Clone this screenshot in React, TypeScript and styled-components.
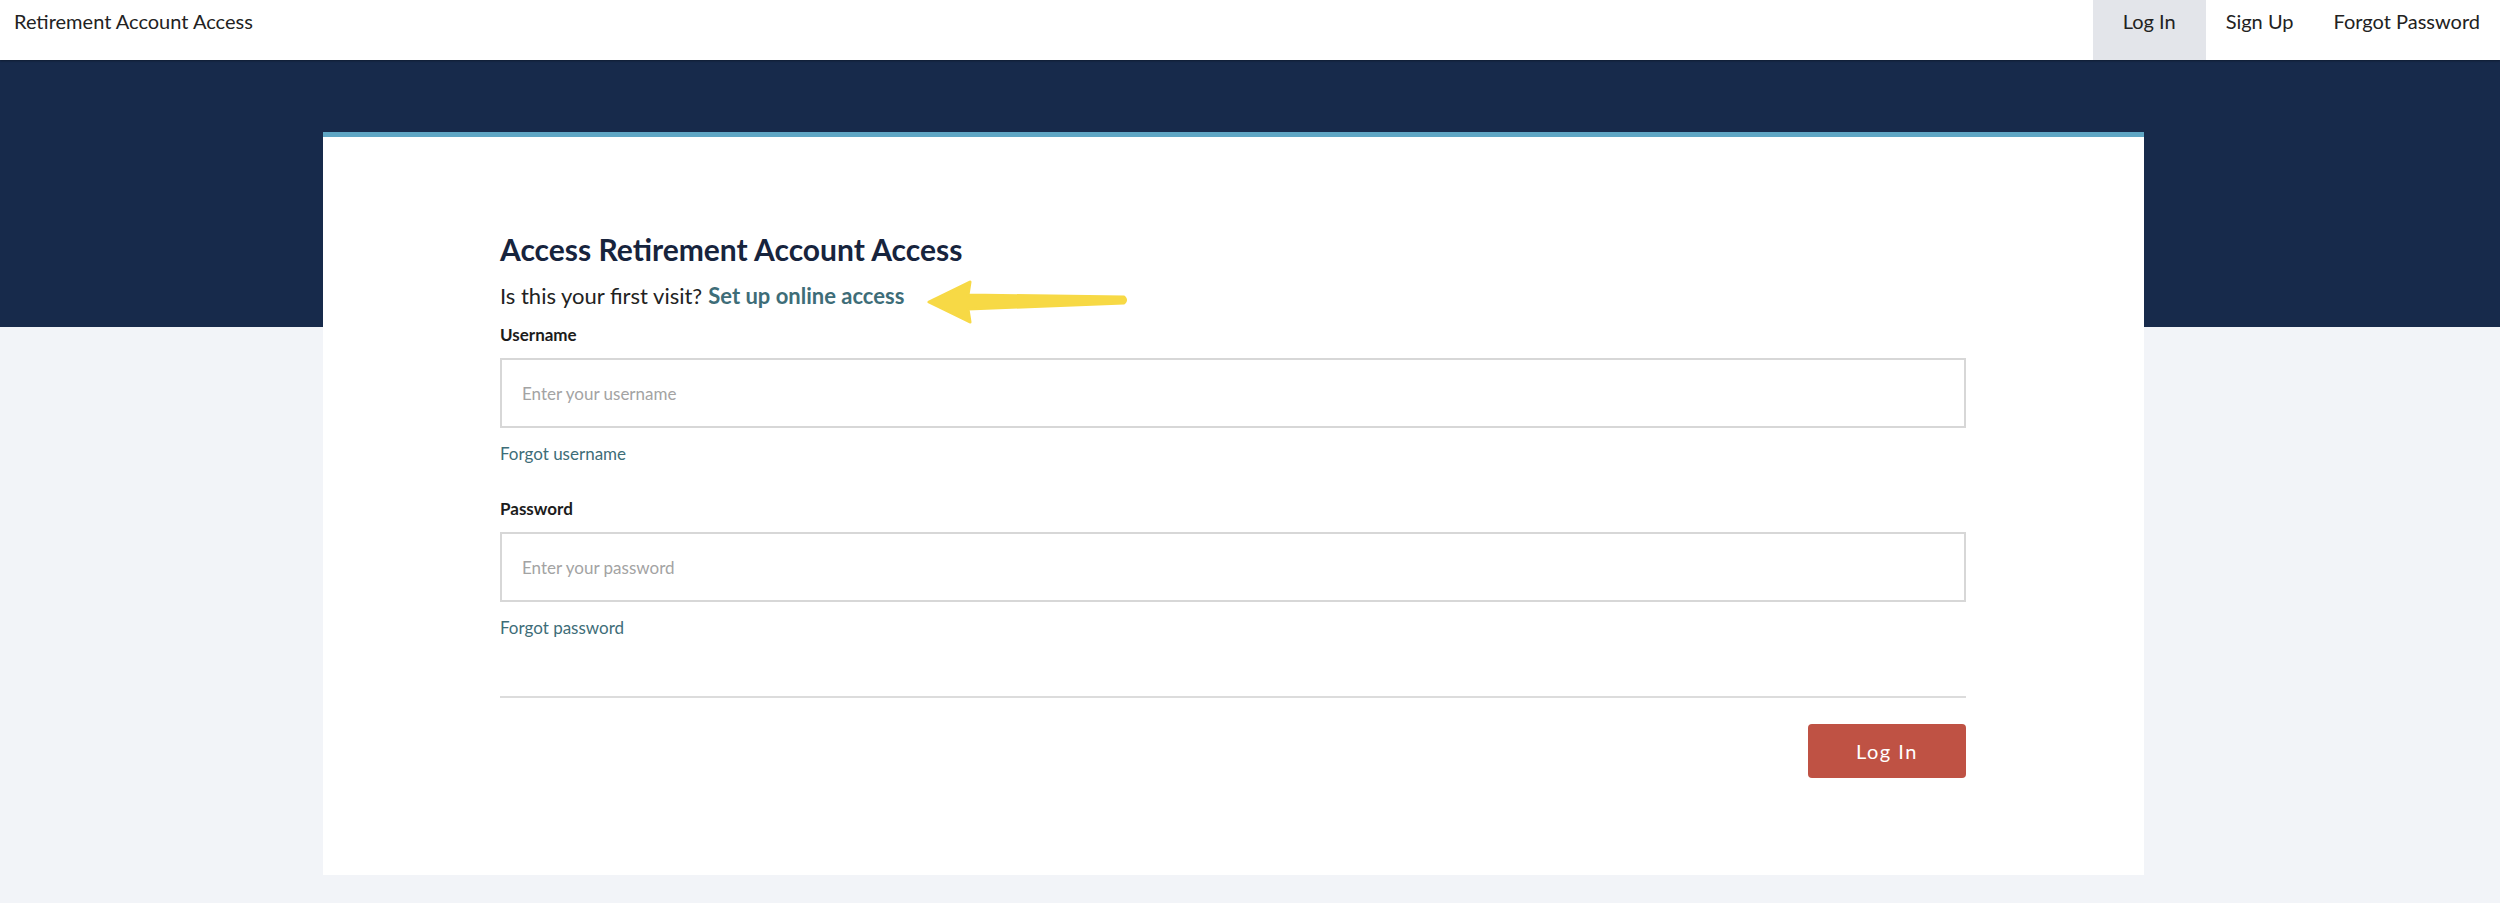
import React from "react";
import styled, { createGlobalStyle } from "styled-components";

const Global = createGlobalStyle`
  html, body { margin: 0; padding: 0; }
  body {
    font-family: Lato, "Open Sans", Arial, sans-serif;
    color: #222;
    background: #f2f4f8;
  }
  * { box-sizing: border-box; }
`;

const Header = styled.header`
  height: 60px;
  display: flex;
  justify-content: space-between;
  align-items: stretch;
  background: #fff;
  position: relative;
  z-index: 1;
  box-shadow: 0 1px 2px rgba(0, 0, 0, 0.35);
`;

const Brand = styled.div`
  padding: 7px 0 0 14px;
  font-size: 20px;
  line-height: 28px;
  color: #222;
`;

const Nav = styled.nav`
  display: flex;
  align-items: stretch;
`;

const NavItem = styled.a<{ $active?: boolean }>`
  display: block;
  padding: 7px ${(p) => (p.$active ? "30px" : "20px")} 0;
  font-size: 20px;
  line-height: 28px;
  color: #222;
  text-decoration: none;
  background: ${(p) => (p.$active ? "#e3e5ea" : "transparent")};
`;

const Main = styled.main`
  background: linear-gradient(#172a4b 0, #172a4b 267px, #f2f4f8 267px);
  padding: 72px 356px 29px 323px;
`;

const Card = styled.section`
  background: #fff;
  border-top: 5px solid #5fa6c4;
  padding: 95px 178px 97px 177px;
`;

const Title = styled.h1`
  margin: 0;
  font-size: 30px;
  line-height: 34px;
  font-weight: 700;
  color: #17243d;
`;

const Intro = styled.p`
  margin: 16px 0 0;
  height: 28px;
  display: flex;
  align-items: center;
  font-size: 22px;
  line-height: 28px;
  color: #222;
`;

const IntroLink = styled.a`
  margin-left: 6px;
  color: #3e6d78;
  font-weight: 700;
  text-decoration: none;
`;

const Arrow = styled.svg`
  flex: none;
  margin: 12px 0 0 22px;
  width: 202px;
  height: 44px;
`;

const Field = styled.div<{ $gap: number }>`
  margin-top: ${(p) => p.$gap}px;
  display: flex;
  flex-direction: column;
`;

const Label = styled.label`
  font-size: 17px;
  line-height: 22px;
  font-weight: 700;
  color: #1c1c1c;
`;

const Input = styled.input`
  margin-top: 12px;
  height: 70px;
  width: 100%;
  border: 2px solid #d7d7d7;
  padding: 0 20px;
  font-family: Lato, "Open Sans", Arial, sans-serif;
  font-size: 17px;
  color: #333;
  background: #fff;
  outline: none;
  &::placeholder { color: #a3a3a3; }
`;

const HelpLink = styled.a`
  margin-top: 14px;
  font-size: 17px;
  line-height: 24px;
  color: #3e6d78;
  text-decoration: none;
`;

const Divider = styled.hr`
  margin: 56px 0 0;
  border: none;
  border-top: 2px solid #dcdcdc;
`;

const Actions = styled.div`
  margin-top: 26px;
  display: flex;
  justify-content: flex-end;
`;

const Button = styled.button`
  width: 158px;
  height: 54px;
  border: none;
  border-radius: 4px;
  background: #bf5244;
  color: #fff;
  font-family: Lato, "Open Sans", Arial, sans-serif;
  font-size: 20px;
  letter-spacing: 1.5px;
  cursor: pointer;
`;

export default function App() {
  return (
    <>
      <Global />
      <Header>
        <Brand>Retirement Account Access</Brand>
        <Nav>
          <NavItem $active href="#">Log In</NavItem>
          <NavItem href="#">Sign Up</NavItem>
          <NavItem href="#">Forgot Password</NavItem>
        </Nav>
      </Header>
      <Main>
        <Card>
          <Title>Access Retirement Account Access</Title>
          <Intro>
            Is this your first visit?
            <IntroLink href="#">Set up online access</IntroLink>
            <Arrow viewBox="0 0 202 44">
              <path
                d="M3 22 L44 2 L42 15 L198 17 Q201 20 198 23 L42 29 L44 42 Z"
                fill="#f7d945"
                stroke="#f7d945"
                strokeWidth="3"
                strokeLinejoin="round"
              />
            </Arrow>
          </Intro>
          <Field $gap={14}>
            <Label>Username</Label>
            <Input placeholder="Enter your username" />
            <HelpLink href="#">Forgot username</HelpLink>
          </Field>
          <Field $gap={32}>
            <Label>Password</Label>
            <Input type="password" placeholder="Enter your password" />
            <HelpLink href="#">Forgot password</HelpLink>
          </Field>
          <Divider />
          <Actions>
            <Button>Log In</Button>
          </Actions>
        </Card>
      </Main>
    </>
  );
}
